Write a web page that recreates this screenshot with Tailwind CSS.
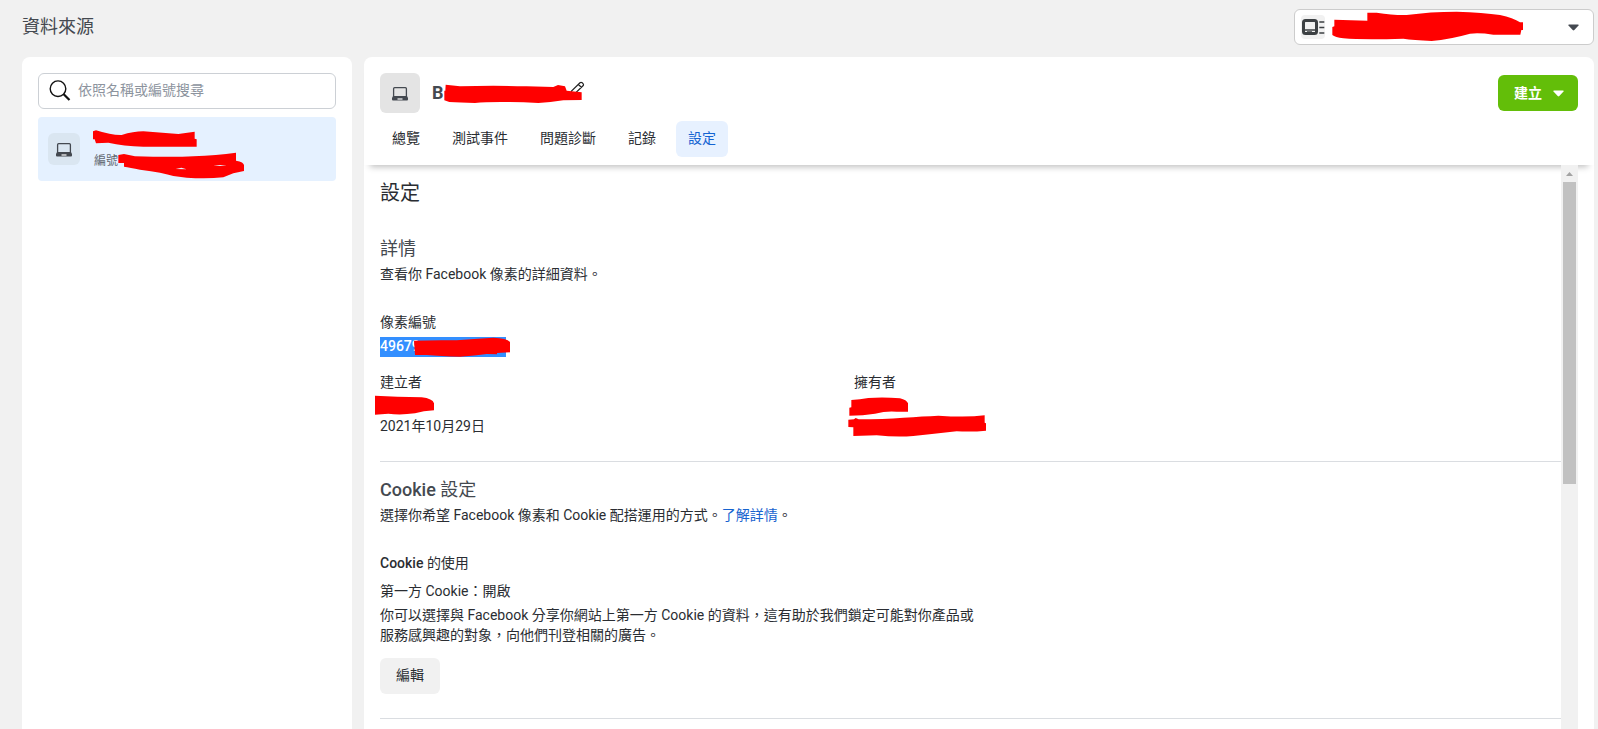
<!DOCTYPE html>
<html lang="zh-Hant">
<head>
    <meta charset="utf-8">
    <meta name="viewport" content="width=device-width, initial-scale=1">
    <title>資料來源</title>
    <script src="https://cdn.jsdelivr.net/npm/@tailwindcss/browser@4"></script>
</head>
<body class="relative flex h-screen flex-col overflow-hidden bg-[#f1f1f1] font-[Roboto,'Noto_Sans_CJK_TC',sans-serif] text-sm leading-5 text-[#2a2d32]">
    <!-- Top bar -->
    <header class="flex h-[57px] shrink-0 items-start justify-between pt-[9px] pr-1 pl-[22px]">
        <h1 class="mt-[6px] text-lg leading-6 text-[#444950]">資料來源</h1>
        <div class="flex h-9 w-[300px] items-center justify-between rounded-md border border-[#ccc] bg-white pr-[14px] pl-[6px]">
            <span class="flex size-6 items-center justify-center rounded bg-[#f1f1f1]">
                <svg class="h-4 w-[23px] shrink-0" viewBox="0 0 23 16" fill="none" stroke="#3c4043">
                    <rect x="1.500" y="1.500" width="13" height="13" rx="2" stroke-width="3"/>
                    <path d="M2 11h12M5 13h5" stroke-width="1.300"/>
                    <path d="M17.300 3H22.300M17.300 8.500H22.300M17.300 14H22.300" stroke-width="1.500"/>
                </svg>
            </span>
            <svg class="h-[7px] w-[11px]" viewBox="0 0 11 7"><path d="M.8.500h9.400q.8.300.3 1L6.300 6q-.8.800-1.600 0L.5 1.500q-.5-.700.300-1z" fill="#444950"/></svg>
        </div>
    </header>

    <main class="flex min-h-0 grow gap-3 pr-1 pl-[22px]">
        <!-- Sidebar -->
        <aside class="w-[330px] shrink-0 rounded-t-lg bg-white px-4 pt-4">
            <div class="flex h-9 items-center rounded-md border border-[#ccd0d5] pl-[10px]">
                <svg class="size-[22px]" viewBox="0 0 22 22" fill="none" stroke="#111">
                    <circle cx="9" cy="8.700" r="7.800" stroke-width="1.400"/>
                    <path d="M14.500 14l6 6" stroke-width="2.200"/>
                </svg>
                <span class="mb-[3px] ml-[7px] text-[#8d949e]">依照名稱或編號搜尋</span>
            </div>
            <div class="mt-2 flex h-16 items-center rounded bg-[#e5f1ff] pl-[10px]">
                <span class="flex size-8 items-center justify-center rounded-md bg-[#dae6f1]">
                    <svg class="mt-px h-[14px] w-4" viewBox="0 0 16 14"><rect x="1.600" y=".700" width="12.800" height="9.500" rx="1" fill="none" stroke="#444950" stroke-width="1.300"/><path d="M1 9h14l1 2v1.500q0 1-1 1H1q-1 0-1-1V11z" fill="#444950"/><path d="M5.500 12h5" stroke="#fff" stroke-width="1.200"/></svg>
                </span>
                <span class="mt-[24px] ml-[14px] text-xs text-[#606770]">編號</span>
            </div>
        </aside>

        <section class="flex min-w-0 grow flex-col rounded-t-lg bg-white">
            <!-- Source name and tabs -->
            <div class="h-[108px] shrink-0 rounded-t-lg px-4 pt-4 shadow-[0_8px_6px_-6px_rgba(0,0,0,0.25)]">
                <div class="flex h-10 items-center">
                    <span class="flex size-10 items-center justify-center rounded-md bg-[#e4e4e4]">
                        <svg class="mt-px h-[14px] w-4" viewBox="0 0 16 14"><rect x="1.600" y=".700" width="12.800" height="9.500" rx="1" fill="none" stroke="#444950" stroke-width="1.300"/><path d="M1 9h14l1 2v1.500q0 1-1 1H1q-1 0-1-1V11z" fill="#444950"/><path d="M5.500 12h5" stroke="#fff" stroke-width="1.200"/></svg>
                    </span>
                    <span class="ml-3 text-lg font-bold text-[#444950]">B</span>
                    <svg class="mb-[8px] ml-[125px] size-4" viewBox="0 0 16 16" fill="#fff" stroke="#222" stroke-width="1.200"><path d="M1.500 14l1-4L11 1.800q1-1 2.200 0l.8.800q1 1 0 2.200L5.500 13zM9.500 3.500l3 3"/></svg>
                    <button class="ml-auto flex h-9 w-20 items-center rounded-md bg-[#63be09] pl-4 font-bold text-white">
                        <span class="-mt-px">建立</span>
                        <svg class="ml-[11px] h-[7px] w-[11px]" viewBox="0 0 11 7"><path d="M.8.500h9.400q.8.300.3 1L6.300 6q-.8.800-1.600 0L.5 1.500q-.5-.700.300-1z" fill="#fff"/></svg>
                    </button>
                </div>
                <nav class="mt-2 flex h-9 gap-2 leading-[34px]">
                    <a class="px-3">總覽</a>
                    <a class="px-3">測試事件</a>
                    <a class="px-3">問題診斷</a>
                    <a class="px-3">記錄</a>
                    <a class="rounded-md bg-[#e7f1ff] px-3 text-[#1464d2]">設定</a>
                </nav>
            </div>

            <!-- Settings -->
            <div class="flex min-h-0 grow pr-4">
                <div class="grow overflow-hidden pt-[14px] pl-4">
                    <h2 class="text-xl leading-7">設定</h2>

                    <h3 class="mt-[30px] text-lg leading-6 text-[#444950]">詳情</h3>
                    <p class="mt-[3px]">查看你 Facebook 像素的詳細資料。</p>
                    <p class="mt-7">像素編號</p>
                    <p class="mt-[5px] h-5 w-[126px] bg-[#338fff] leading-[19px] font-medium text-white">49679</p>
                    <div class="mt-[15px] grid h-16 grid-cols-[474px_1fr]">
                        <div>
                            <p>建立者</p>
                            <p class="mt-6">2021年10月29日</p>
                        </div>
                        <p>擁有者</p>
                    </div>

                    <div class="mt-[25px] border-t border-[#dadde1] pt-4">
                        <h3 class="text-lg leading-6 font-medium text-[#444950]">Cookie <span class="font-normal">設定</span></h3>
                        <p class="mt-[3px]">選擇你希望 Facebook 像素和 Cookie 配搭運用的方式。<a class="text-[#1763cf]">了解詳情</a>。</p>
                        <h4 class="mt-7 font-medium">Cookie <span class="font-normal">的使用</span></h4>
                        <p class="mt-2">第一方 Cookie：開啟</p>
                        <p class="mt-1 w-[600px]">你可以選擇與 Facebook 分享你網站上第一方 Cookie 的資料，這有助於我們鎖定可能對你產品或<br>服務感興趣的對象，向他們刊登相關的廣告。</p>
                        <button class="mt-[13px] block h-9 w-[60px] rounded-md bg-[#f1f1f1] pb-[2px]">編輯</button>
                    </div>
                    <div class="mt-6 border-t border-[#dadde1]"></div>
                </div>
                <!-- Scrollbar -->
                <div class="relative flex w-[17px] shrink-0 flex-col items-center bg-[#f1f1f1]">
                    <svg class="mt-[7px] mb-[6px] h-1 w-[7px] shrink-0" viewBox="0 0 7 4"><path d="M0 4L3.500 0 7 4z" fill="#a3a3a3"/></svg>
                    <div class="h-[302px] w-[13px] bg-[#c1c1c1]"></div>
                </div>
            </div>
        </section>
    </main>

    <!-- Red marker strokes over the private values -->
    <svg class="pointer-events-none absolute top-0 left-0 h-[729px] w-[1598px]" viewBox="0 0 4794 2187" fill="#f00">
        <path d="M279 394L288 391Q335 406 365 405Q400 394 430 394L535 402L584 395V416L590 418V440H430Q370 438 325 428L288 430L284 418H279z"/>
        <g transform="translate(120 360)">
            <path d="M235 105L252 102L285 109Q400 112 460 109Q530 106 588 98V122Q612 126 612 136V153L580 160L550 172Q500 177 440 173L400 168Q370 158 300 149Q270 143 252 140V129H235z"/>
            <path d="M407 147L424 143L440 148zM520 136L540 135L560 137L540 138z" fill="#e5f1ff"/>
        </g>
        <g transform="translate(3840 0)">
            <path d="M163 59L262 62V38H290Q340 46 380 45Q450 35 530 35Q610 38 660 45Q700 54 720 67H729V90H724L721 104H640Q600 98 570 101Q510 118 455 123Q400 120 370 116Q250 120 190 115Q165 112 157 105V81L163 79z"/>
        </g>
        <g transform="translate(1080 150)">
            <path d="M257 104L300 109Q400 106 500 109L580 111L594 105L615 109L620 122L665 127V150L610 151Q570 157 535 159Q490 156 450 156Q380 155 345 159Q300 157 268 156L253 151V122H256z"/>
        </g>
        <g transform="translate(1080 900)">
            <path d="M162 122Q220 120 290 121Q340 116 400 113Q440 114 450 126V157L411 159V163L380 162Q330 169 300 170Q240 169 200 165H165z"/>
            <path d="M45 287Q110 290 185 292Q218 296 222 310V331Q190 332 165 340Q120 346 85 341L45 344z"/>
        </g>
        <g transform="translate(2400 1050)">
            <path d="M154 150Q180 148 205 144Q250 140 300 145Q320 150 324 160V185H290Q260 182 225 191Q190 197 148 197V173L154 172z"/>
            <path d="M145 209L162 208L167 204L176 208Q250 208 310 203Q370 199 415 197Q500 203 554 196V218L558 220V242Q520 246 470 244Q400 252 340 258Q290 262 230 256L160 258V232L145 231z"/>
        </g>
    </svg>
</body>
</html>
